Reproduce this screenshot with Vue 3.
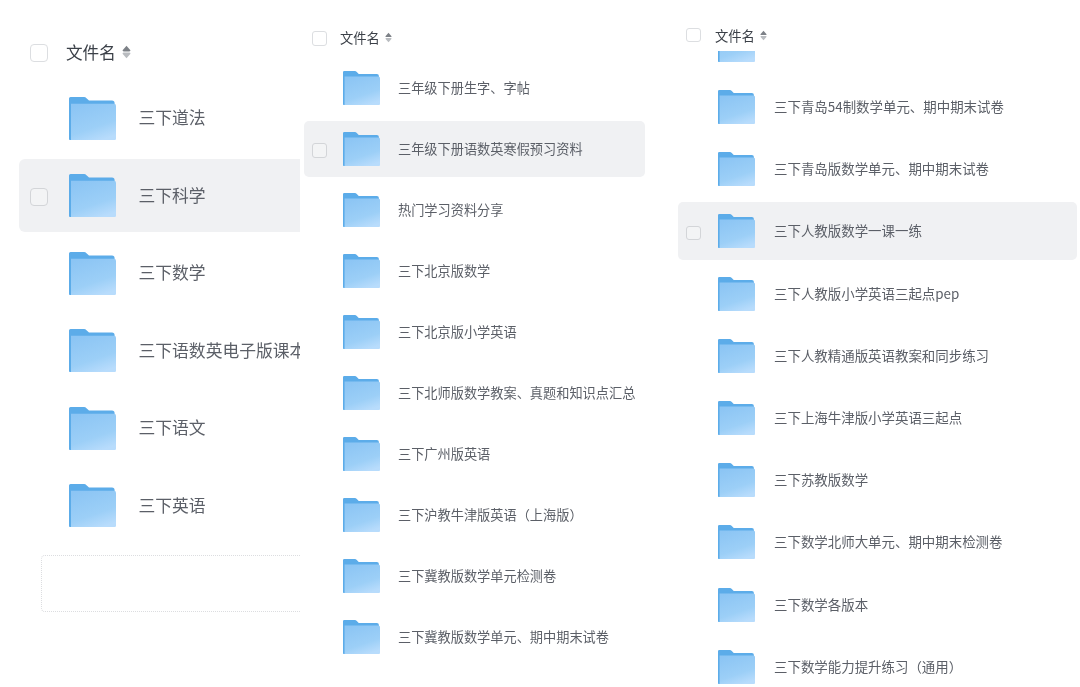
<script setup>
const panels = [
  {
    key: 'a',
    selected: '三下科学',
    names: ['三下道法', '三下科学', '三下数学', '三下语数英电子版课本', '三下语文', '三下英语'],
    dropzone: true,
  },
  {
    key: 'b',
    selected: '三年级下册语数英寒假预习资料',
    names: [
      '三年级下册生字、字帖',
      '三年级下册语数英寒假预习资料',
      '热门学习资料分享',
      '三下北京版数学',
      '三下北京版小学英语',
      '三下北师版数学教案、真题和知识点汇总',
      '三下广州版英语',
      '三下沪教牛津版英语（上海版）',
      '三下冀教版数学单元检测卷',
      '三下冀教版数学单元、期中期末试卷',
    ],
  },
  {
    key: 'c',
    selected: '三下人教版数学一课一练',
    names: [
      '',
      '三下青岛54制数学单元、期中期末试卷',
      '三下青岛版数学单元、期中期末试卷',
      '三下人教版数学一课一练',
      '三下人教版小学英语三起点pep',
      '三下人教精通版英语教案和同步练习',
      '三下上海牛津版小学英语三起点',
      '三下苏教版数学',
      '三下数学北师大单元、期中期末检测卷',
      '三下数学各版本',
      '三下数学能力提升练习（通用）',
    ],
  },
];
</script>

<template>
  <div class="board">
    <svg class="defs" width="0" height="0" aria-hidden="true">
      <defs>
        <linearGradient id="folder-body" x1="0.25" y1="0" x2="0.7" y2="1">
          <stop offset="0" stop-color="#8cc5f4" />
          <stop offset="0.65" stop-color="#9ccff7" />
          <stop offset="1" stop-color="#b8dcfc" />
        </linearGradient>
      </defs>
    </svg>

    <section v-for="panel in panels" :key="panel.key" class="panel" :class="'panel-' + panel.key">
      <header class="head">
        <span class="check"></span>
        <span class="title">文件名</span>
        <svg class="sort" viewBox="0 0 8 12">
          <path d="M4 0.5 7.5 4.5Q7.5 5.5 6.5 5.5H1.5Q0.5 5.5 0.5 4.5Z" fill="#7d8187" />
          <path d="M4 11.5 0.5 7.5Q0.5 6.5 1.5 6.5H6.5Q7.5 6.5 7.5 7.5Z" fill="#b9bcc0" />
        </svg>
      </header>

      <div class="list">
        <div class="rows">
          <div
            v-for="name in panel.names"
            :key="name"
            class="row"
            :class="{ selected: name === panel.selected }"
          >
            <span class="check"></span>
            <svg class="folder" viewBox="0 0 47 43">
              <path d="M1.5 0H15Q16.5 0 17.5 1.2L20 3.6H43Q45.6 3.6 45.6 6.2V12H0V1.5Q0 0 1.5 0Z" fill="#5cace9" />
              <path d="M0 6.8H45Q47 6.8 47 8.8V41.8Q47 43 45.8 43H1.2Q0 43 0 41.8Z" fill="url(#folder-body)" />
              <path d="M0 4H2V43H1.2Q0 43 0 41.8Z" fill="#5cace9" />
            </svg>
            <span class="name">{{ name }}</span>
          </div>
        </div>
      </div>

      <div v-if="panel.dropzone" class="dropzone"></div>
    </section>
  </div>
</template>

<style scoped>
.board {
  display: flex;
  align-items: flex-start;
  width: 1080px;
  height: 687px;
  overflow: hidden;
  background: #fff;
  font-family: "Noto Sans CJK SC", "Noto Sans", sans-serif;
  filter: blur(0.45px);
}

.defs {
  position: absolute;
}

.panel {
  flex: none;
  box-sizing: border-box;
  overflow: hidden;
}

.head {
  display: flex;
  align-items: center;
  color: #3b4048;
}

.check {
  flex: none;
  box-sizing: border-box;
  visibility: hidden;
  border: 1.5px solid #dcdee1;
  border-radius: 3px;
  background: #fff;
}

.head .check {
  visibility: visible;
}

.selected .check {
  visibility: visible;
  background: #f3f4f5;
  border-color: #d3d5d8;
}

.sort {
  flex: none;
}

.list {
  overflow: hidden;
}

.rows {
  display: flex;
  flex-direction: column;
}

.row {
  display: flex;
  align-items: center;
  border-radius: 5px;
  color: #5b5f67;
  white-space: nowrap;
}

.row.selected {
  background: #f0f1f3;
}

.folder {
  flex: none;
}

.name {
  overflow: hidden;
  padding-bottom: 2px;
}

/* first panel, largest scale */
.panel-a {
  width: 300px;
  padding-top: 23px;
}

.panel-a .head {
  height: 58.5px;
  padding-left: 30px;
}

.panel-a .head .check {
  width: 18px;
  height: 18px;
  margin-top: 2px;
  border-radius: 4px;
}

.panel-a .title {
  margin-left: 18px;
  font-size: 16.6px;
}

.panel-a .sort {
  width: 9px;
  height: 14px;
  margin-left: 6px;
}

.panel-a .list {
  margin-left: 19px;
}

.panel-a .rows {
  gap: 4.5px;
}

.panel-a .row {
  height: 73px;
  padding-left: 10.5px;
  font-size: 16.8px;
  border-radius: 6px 0 0 6px;
}

.panel-a .row .check {
  width: 18px;
  height: 18px;
  margin: 2px 21.5px 0 0;
  border-radius: 4px;
}

.panel-a .folder {
  width: 47px;
  height: 43px;
  margin-right: 22.5px;
}

.dropzone {
  box-sizing: border-box;
  height: 57px;
  margin: 12.5px 0 0 41px;
  border: 1.5px dotted #dcdde0;
  border-right: 0;
  border-radius: 4px 0 0 4px;
}

/* second panel */
.panel-b {
  width: 345px;
  padding: 14px 0 0 4px;
}

.panel-b .head {
  height: 46px;
  padding-left: 8px;
}

.panel-b .head .check {
  margin-top: 3px;
}

.panel-b .title {
  margin-left: 13.5px;
  font-size: 13.3px;
}

.panel-b .rows {
  gap: 5px;
}

.panel-b .row {
  height: 56px;
  padding-left: 8px;
  font-size: 13.2px;
}

/* third panel, list scrolled so the first row is cut off */
.panel-c {
  width: 399px;
  margin-left: 33px;
  padding-top: 19px;
}

.panel-c .head {
  height: 32px;
  padding-left: 8px;
}

.panel-c .title {
  margin-left: 14.5px;
  font-size: 13.3px;
}

.panel-c .list {
  height: 636px;
}

.panel-c .rows {
  gap: 4.2px;
  margin-top: -35.2px;
}

.panel-c .row {
  height: 58px;
  padding-left: 8px;
  font-size: 13.45px;
}

.panel-b .head .check,
.panel-c .head .check,
.panel-b .row .check,
.panel-c .row .check {
  width: 14.5px;
  height: 14.5px;
}

.panel-b .row .check {
  margin: 3px 16.5px 0 0;
}

.panel-c .row .check {
  margin: 3px 17.5px 0 0;
}

.panel-b .sort,
.panel-c .sort {
  width: 7px;
  height: 11px;
  margin-left: 5px;
}

.panel-b .folder,
.panel-c .folder {
  width: 37px;
  height: 34px;
  margin-right: 18px;
}

.panel-c .folder {
  margin-right: 19px;
}
</style>

<style>
html,
body {
  margin: 0;
  overflow: hidden;
  background: #fff;
}
</style>
